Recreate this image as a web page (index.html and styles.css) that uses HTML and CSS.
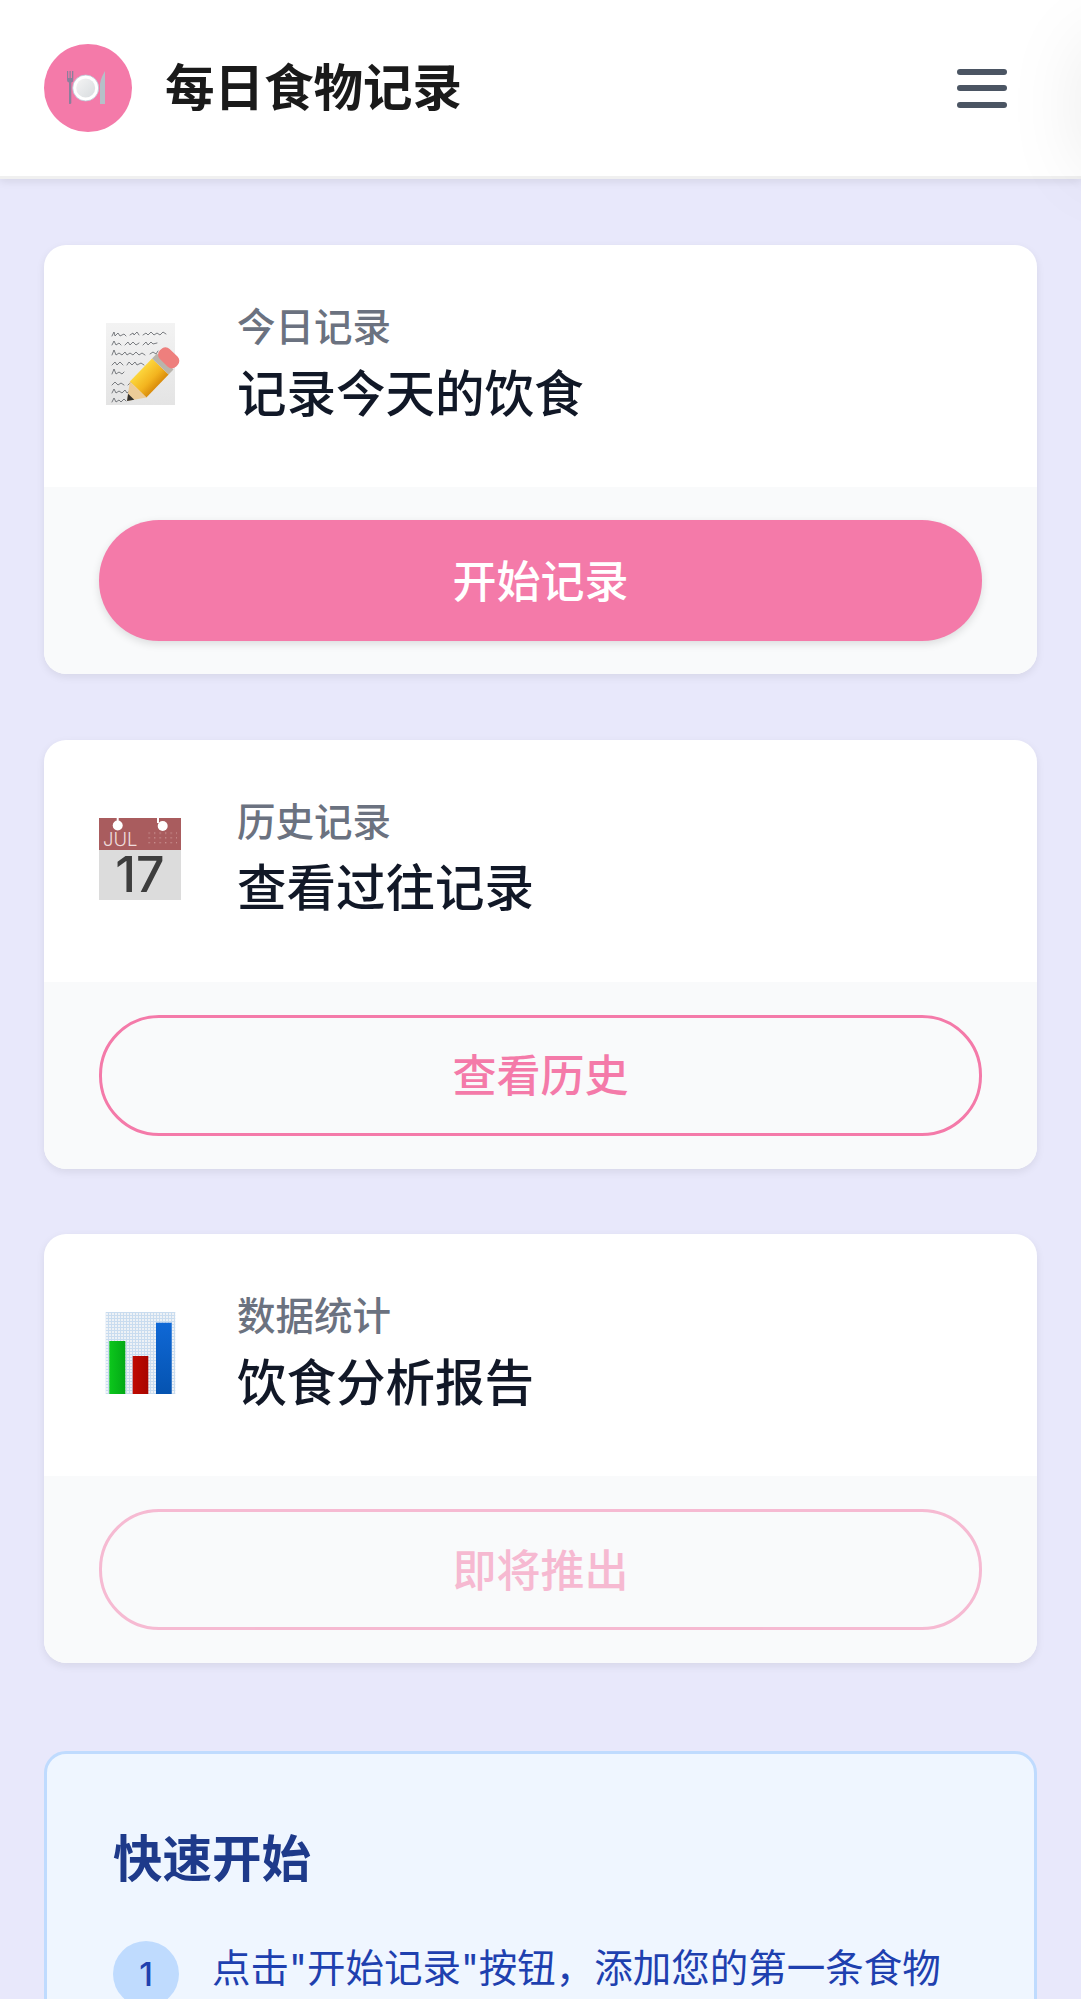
FILE: index.html
```html
<!DOCTYPE html>
<html lang="zh-CN">
<head>
    <meta charset="UTF-8">
    <meta name="viewport" content="width=device-width, initial-scale=1.0">
    <title>每日食物记录</title>
    <link rel="stylesheet" href="styles.css">
</head>
<body>
    <header class="topbar">
        <div class="brand">
            <div class="logo">
                <svg width="44" height="44" viewBox="0 0 44 44">
                    <defs>
                        <linearGradient id="plateFill" x1="0" y1="0" x2="1" y2="1">
                            <stop offset="0" stop-color="#f4f4f4"/>
                            <stop offset="1" stop-color="#d8dcdf"/>
                        </linearGradient>
                    </defs>
                    <path d="M1 5h1.200v7h1.300V5h1.200v7h1.300V5h1.300v9q0 2-2 2.500V37q0 1-1.400 1T3 37V16.500q-2-.5-2-2.500z" fill="#8c7f9c"/>
                    <path d="M39 5v33h-5V22q-1-7 5-17z" fill="#b5c0c8"/>
                    <circle cx="19.700" cy="22" r="13" fill="#fff" stroke="#b9c6d4" stroke-width=".8"/>
                    <circle cx="19.700" cy="22" r="9.500" fill="url(#plateFill)"/>
                </svg>
            </div>
            <h1 class="brand-title">每日食物记录</h1>
        </div>
        <button class="menu-btn" type="button" aria-label="菜单">
            <span></span>
            <span></span>
            <span></span>
        </button>
    </header>

    <main class="content">
        <section class="card">
            <div class="card-head">
                <svg class="card-icon" width="82" height="82" viewBox="0 0 82 82">
                    <defs>
                        <linearGradient id="paperFill" x1="0" y1="0" x2="0" y2="1">
                            <stop offset="0" stop-color="#f3f3f3"/>
                            <stop offset="1" stop-color="#e4e4e4"/>
                        </linearGradient>
                        <linearGradient id="pencilFill" x1="0" y1="0" x2="0" y2="1">
                            <stop offset="0" stop-color="#fcd63c"/>
                            <stop offset=".6" stop-color="#f3b41f"/>
                            <stop offset="1" stop-color="#d98c0c"/>
                        </linearGradient>
                    </defs>
                    <rect x="7" y="0" width="69" height="82" fill="url(#paperFill)"/>
                    <g fill="none" stroke="#5c5f64" stroke-width=".8" stroke-linecap="round">
                        <path d="M13 13l2-4 1 4 3-3 2 3 4-2 2 2M31 12l3-2 1 2 3-3 2 3M44 12l3-2 2 2 3-3 3 3 3-2 3 2 3-3 3 2"/>
                        <path d="M13 22l2-4 2 4 3-2 2 2M26 22l3-3 2 3 3-3 3 3 3-2M44 22l3-3 2 3 3-3 2 2 4-1"/>
                        <path d="M13 32l2-5 2 5 3-2 3 2 3-3 2 3 3-2 3 2 3-3 3 3 3-2 3 2M51 31l3-2 3 2 2-3"/>
                        <path d="M13 42l3-3 2 3 3-3 3 3M28 42l2-3 3 3 3-3 2 3 4-2 3 2M48 42l3-2 3 2"/>
                        <path d="M13 51l2-5 2 5 3-2 3 2 2-2"/>
                        <path d="M13 62l3-3 3 3 3-2 3 2M29 62l3-3 3 2 3-2 3 2 4-2"/>
                        <path d="M13 70l2-4 2 4 3-2 3 2 3-3 2 3 3-2 3 2 3-3 3 3"/>
                        <path d="M13 79l2-4 2 4 3-2 2 2 3-3 2 2"/>
                    </g>
                    <g transform="translate(28 78) rotate(-46)">
                        <rect x="16" y="-11.500" width="32" height="23" fill="url(#pencilFill)"/>
                        <polygon points="0,0 16,-11.500 16,11.500" fill="#eccb98"/>
                        <polygon points="0,0 6,-4.300 6,4.300" fill="#33302c"/>
                        <rect x="48" y="-11.500" width="7" height="23" fill="#b9b4ab"/>
                        <rect x="53" y="-11.500" width="14" height="23" rx="6" fill="#ee7f7d"/>
                    </g>
                </svg>
                <div>
                    <p class="card-label">今日记录</p>
                    <h2 class="card-title">记录今天的饮食</h2>
                </div>
            </div>
            <div class="card-foot">
                <button class="btn btn-solid" type="button">开始记录</button>
            </div>
        </section>

        <section class="card">
            <div class="card-head">
                <svg class="card-icon" width="82" height="82" viewBox="0 0 82 82">
                    <defs>
                        <pattern id="calDots" width="5.500" height="4.800" patternUnits="userSpaceOnUse">
                            <rect width="1.300" height="1.300" fill="#c88f8f"/>
                        </pattern>
                    </defs>
                    <rect width="82" height="32" fill="#a95c5e"/>
                    <rect y="32" width="82" height="50" fill="#dcdcdc"/>
                    <rect x="46" y="14" width="32" height="14" fill="url(#calDots)"/>
                    <rect x="17.700" y="0" width="2" height="7" fill="#fff"/>
                    <rect x="58" y="0" width="2" height="5" fill="#fff"/>
                    <circle cx="18.700" cy="7.500" r="5" fill="#fff"/>
                    <circle cx="63.700" cy="8" r="5" fill="#fff"/>
                    <text class="cal-month" x="4" y="28">JUL</text>
                    <text class="cal-day" x="41" y="74">17</text>
                </svg>
                <div>
                    <p class="card-label">历史记录</p>
                    <h2 class="card-title">查看过往记录</h2>
                </div>
            </div>
            <div class="card-foot">
                <button class="btn btn-outline" type="button">查看历史</button>
            </div>
        </section>

        <section class="card">
            <div class="card-head">
                <svg class="card-icon" width="82" height="82" viewBox="0 0 82 82">
                    <defs>
                        <pattern id="chartGrid" width="3" height="3" patternUnits="userSpaceOnUse">
                            <rect width="3" height="3" fill="#eef2f6"/>
                            <rect width="1" height="3" fill="#c9dcef"/>
                            <rect width="3" height="1" fill="#c9dcef"/>
                        </pattern>
                        <linearGradient id="barGreen" x1="0" y1="0" x2="1" y2="0">
                            <stop offset="0" stop-color="#0cc71c"/>
                            <stop offset="1" stop-color="#03a916"/>
                        </linearGradient>
                        <linearGradient id="barRed" x1="0" y1="0" x2="1" y2="0">
                            <stop offset="0" stop-color="#c00a00"/>
                            <stop offset="1" stop-color="#a80500"/>
                        </linearGradient>
                        <linearGradient id="barBlue" x1="0" y1="0" x2="0" y2="1">
                            <stop offset="0" stop-color="#0f68d6"/>
                            <stop offset="1" stop-color="#0553b0"/>
                        </linearGradient>
                    </defs>
                    <rect x="6.700" width="69.600" height="82" fill="url(#chartGrid)"/>
                    <rect x="10.300" y="29" width="16" height="53" fill="url(#barGreen)"/>
                    <rect x="33.700" y="44" width="15.600" height="38" fill="url(#barRed)"/>
                    <rect x="57" y="10.700" width="15.700" height="71.300" fill="url(#barBlue)"/>
                </svg>
                <div>
                    <p class="card-label">数据统计</p>
                    <h2 class="card-title">饮食分析报告</h2>
                </div>
            </div>
            <div class="card-foot">
                <button class="btn btn-outline btn-soon" type="button">即将推出</button>
            </div>
        </section>

        <section class="quick">
            <h3 class="quick-title">快速开始</h3>
            <ol class="quick-list">
                <li class="quick-item">
                    <span class="quick-num">1</span>
                    <span class="quick-text">点击"开始记录"按钮，添加您的第一条食物</span>
                </li>
            </ol>
        </section>
    </main>

    <aside class="drawer"></aside>
</body>
</html>
```

FILE: styles.css
```css
* {
    box-sizing: border-box;
}

html,
body {
    height: 100%;
    overflow: hidden;
}

body {
    margin: 0;
    background-color: #e8e8fb;
    font-family: Inter, "Noto Sans CJK SC", sans-serif;
    color: #111827;
}

h1,
h2,
h3,
p,
ol {
    margin: 0;
    padding: 0;
}

.topbar {
    display: flex;
    justify-content: space-between;
    align-items: center;
    height: 179px;
    padding: 0 74px 0 44px;
    background-color: #fff;
    border-bottom: 3px solid #f0f0f0;
    box-shadow: 0 3px 8px rgba(0, 0, 0, 0.08);
}

.brand {
    display: flex;
    align-items: center;
    gap: 33px;
}

.logo {
    display: flex;
    justify-content: center;
    align-items: center;
    width: 88px;
    height: 88px;
    border-radius: 50%;
    background-color: #f47aa9;
}

.brand-title {
    font-size: 49.500px;
    font-weight: 700;
    line-height: 1.5;
    color: #1a1a1a;
}

.menu-btn {
    display: flex;
    flex-direction: column;
    gap: 10.500px;
    width: 50px;
    padding: 0;
    border: none;
    background: none;
}

.menu-btn span {
    display: block;
    height: 6px;
    border-radius: 3px;
    background-color: #4b5563;
}

.content {
    padding: 66px 44px 0;
}

.card {
    margin-bottom: 65.500px;
    border-radius: 22px;
    background-color: #fff;
    box-shadow: 0 3px 8px rgba(0, 0, 0, 0.08);
    overflow: hidden;
}

.card-head {
    display: flex;
    align-items: center;
    gap: 56px;
    padding: 54px 55px 56px;
}

.card-icon {
    flex-shrink: 0;
    margin-bottom: 2px;
    overflow: visible;
}

.cal-month {
    font-family: Inter, sans-serif;
    font-size: 18.500px;
    font-weight: 300;
    fill: #efdcdc;
}

.cal-day {
    font-family: Inter, sans-serif;
    font-size: 50px;
    font-weight: 500;
    text-anchor: middle;
    fill: #3d3d3d;
}

.card-label {
    font-size: 38.500px;
    font-weight: 500;
    line-height: 1.5;
    color: #6b7280;
}

.card-title {
    font-size: 49.500px;
    font-weight: 500;
    line-height: 1.5;
    color: #111827;
}

.card-foot {
    padding: 33px 55px;
    background-color: #f9fafb;
}

.btn {
    display: block;
    width: 100%;
    height: 121px;
    padding: 0 0 4px;
    border-radius: 60px;
    font-family: inherit;
    font-size: 44px;
    font-weight: 500;
}

.btn-solid {
    border: none;
    background-color: #f47aa9;
    color: #fff;
    box-shadow: 0 3px 8px rgba(0, 0, 0, 0.12);
}

.btn-outline {
    border: 3px solid #f47aa9;
    background-color: transparent;
    color: #f47aa9;
}

.btn-soon {
    opacity: 0.5;
}

.quick {
    margin-top: 88px;
    padding: 68px 66px 66px;
    border: 3px solid #bfdbfe;
    border-radius: 22px;
    background-color: #eff6ff;
}

.quick-title {
    margin-bottom: 42px;
    font-size: 49.500px;
    font-weight: 600;
    line-height: 1.5;
    color: #1e3a8a;
}

.quick-list {
    list-style: none;
}

.quick-item {
    display: flex;
    align-items: flex-start;
    gap: 33px;
}

.quick-num {
    display: flex;
    flex-shrink: 0;
    justify-content: center;
    align-items: center;
    width: 66px;
    height: 66px;
    margin-top: 3px;
    border-radius: 50%;
    background-color: #bfdbfe;
    font-size: 33px;
    font-weight: 500;
    color: #1e40af;
}

.quick-text {
    margin-top: 2px;
    font-size: 38.500px;
    line-height: 1.5;
    color: #1e40af;
}

/* closed dropdown, only its shadow shows at the right edge */
.drawer {
    position: fixed;
    top: 40px;
    left: 100%;
    width: 300px;
    height: 130px;
    background-color: #fff;
    box-shadow: 0 0 80px rgba(0, 0, 0, 0.08);
}
```
